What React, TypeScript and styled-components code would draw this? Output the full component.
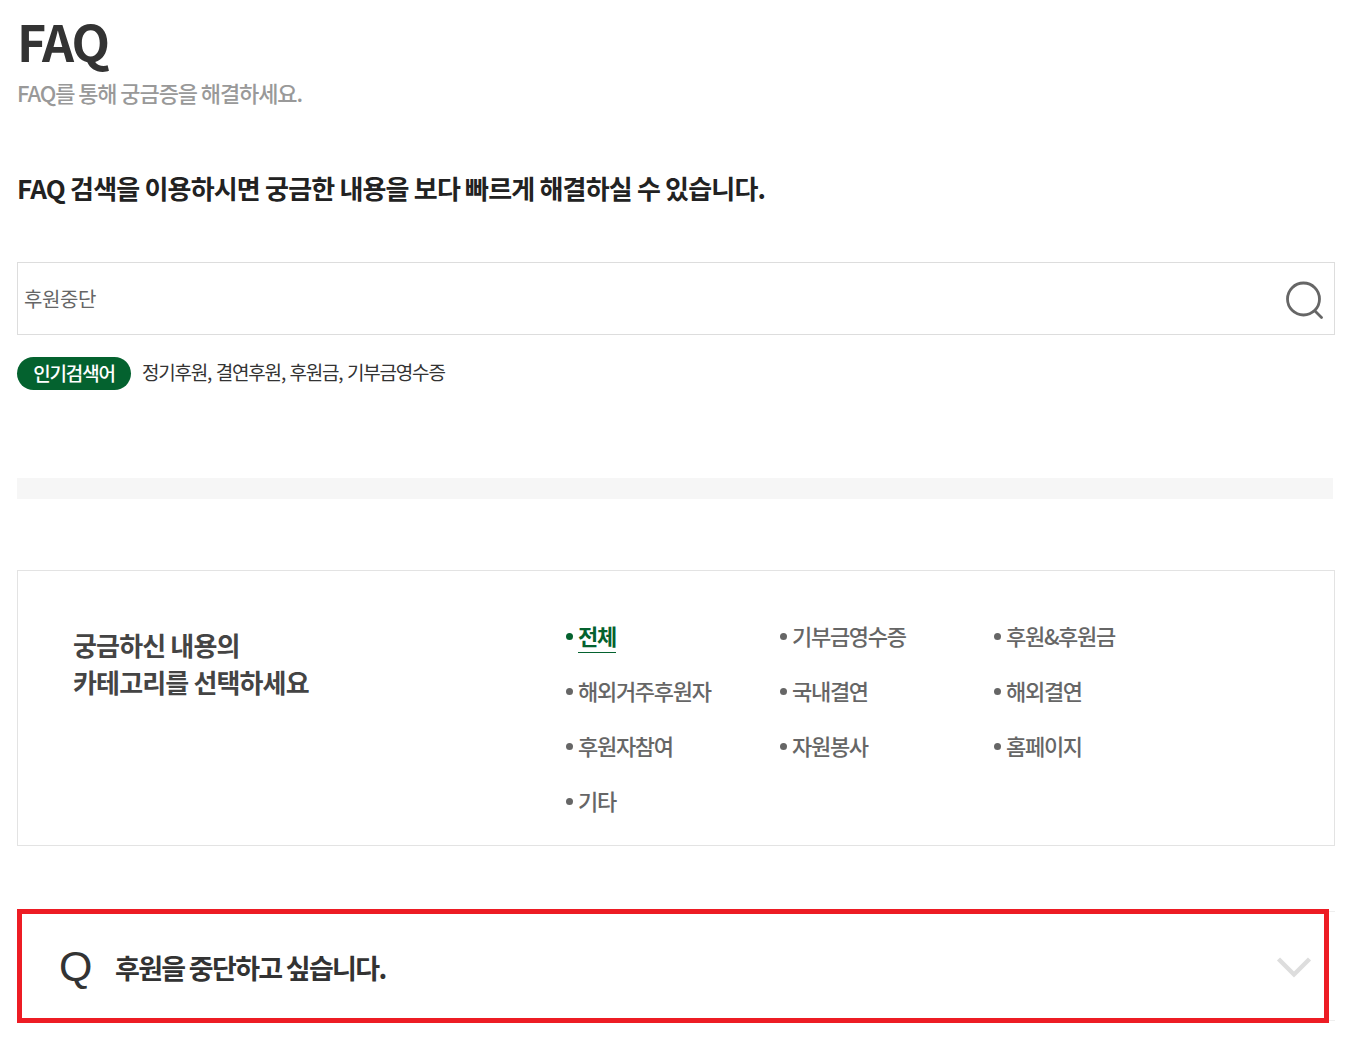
import React from 'react';
import styled, { createGlobalStyle } from 'styled-components';

const categories = [
  '전체',
  '기부금영수증',
  '후원&후원금',
  '해외거주후원자',
  '국내결연',
  '해외결연',
  '후원자참여',
  '자원봉사',
  '홈페이지',
  '기타',
];

export default function App() {
  return (
    <>
      <GlobalStyle />
      <Page>
        <Title>FAQ</Title>
        <Subtitle>FAQ를 통해 궁금증을 해결하세요.</Subtitle>
        <Lead>FAQ 검색을 이용하시면 궁금한 내용을 보다 빠르게 해결하실 수 있습니다.</Lead>
        <SearchBox>
          <SearchText>후원중단</SearchText>
          <svg width="40" height="40" viewBox="0 0 40 40" fill="none">
            <circle cx="18.5" cy="20" r="16" stroke="#666" strokeWidth="2.8" />
            <path d="M30 32l6.5 6.5" stroke="#666" strokeWidth="2.8" strokeLinecap="round" />
          </svg>
        </SearchBox>
        <PopularRow>
          <PopularBadge>인기검색어</PopularBadge>
          <PopularWords>정기후원, 결연후원, 후원금, 기부금영수증</PopularWords>
        </PopularRow>
        <GrayBar />
        <CategoryBox>
          <CategoryTitle>
            궁금하신 내용의
            <br />
            카테고리를 선택하세요
          </CategoryTitle>
          <CategoryGrid>
            {categories.map((name, i) => (
              <CategoryItem key={name} $active={i === 0}>
                <CategoryLabel $active={i === 0}>{name}</CategoryLabel>
              </CategoryItem>
            ))}
          </CategoryGrid>
        </CategoryBox>
        <QuestionRow>
          <QuestionMark>Q</QuestionMark>
          <QuestionText>후원을 중단하고 싶습니다.</QuestionText>
          <Chevron width="36" height="24" viewBox="0 0 36 24" fill="none">
            <path d="M2.5 5L18 20.5 33.5 5" stroke="#ddd" strokeWidth="4.4" />
          </Chevron>
          <Highlight />
        </QuestionRow>
      </Page>
    </>
  );
}

const GlobalStyle = createGlobalStyle`
  html, body {
    margin: 0;
    padding: 0;
    background: #fff;
  }

  body {
    font-family: "Noto Sans CJK KR", "Noto Sans", sans-serif;
    color: #333;
  }
`;

const Page = styled.div`
  width: 1318px;
  height: 1044px;
  margin-left: 17px;
`;

const Title = styled.h1`
  margin: 0;
  padding-top: 6px;
  font-size: 50px;
  line-height: 68px;
  font-weight: 700;
  letter-spacing: -2px;
  color: #333;
`;

const Subtitle = styled.p`
  margin: 3px 0 0;
  font-size: 22px;
  line-height: 30px;
  font-weight: 500;
  letter-spacing: -1.1px;
  color: #999;
`;

const Lead = styled.h2`
  margin: 0;
  padding-top: 62px;
  font-size: 26px;
  line-height: 38px;
  font-weight: 700;
  letter-spacing: -0.82px;
  color: #222;
`;

const SearchBox = styled.div`
  display: flex;
  align-items: center;
  justify-content: space-between;
  box-sizing: border-box;
  width: 1318px;
  height: 73px;
  margin-top: 55px;
  padding: 0 9px 0 6px;
  border: 1px solid #ddd;
`;

const SearchText = styled.span`
  font-size: 20px;
  letter-spacing: -0.4px;
  color: #666;
`;

const PopularRow = styled.div`
  display: flex;
  align-items: center;
  gap: 11px;
  margin-top: 22px;
`;

const PopularBadge = styled.span`
  display: flex;
  align-items: center;
  justify-content: center;
  box-sizing: border-box;
  width: 114px;
  height: 33px;
  padding-bottom: 2px;
  border-radius: 17px;
  background: #04622f;
  color: #fff;
  font-size: 19px;
  font-weight: 500;
  letter-spacing: -1.2px;
`;

const PopularWords = styled.span`
  padding-bottom: 4px;
  font-size: 19px;
  letter-spacing: -1.2px;
  word-spacing: 1.5px;
  color: #333;
`;

const GrayBar = styled.div`
  width: 1316px;
  height: 21px;
  margin-top: 88px;
  background: #f6f6f6;
`;

const CategoryBox = styled.section`
  display: flex;
  box-sizing: border-box;
  width: 1318px;
  height: 276px;
  margin-top: 71px;
  padding: 48px 0 0 55px;
  border: 1px solid #e3e3e3;
`;

const CategoryTitle = styled.h3`
  width: 492px;
  margin: -9px 0 0;
  padding-top: 16px;
  font-size: 26px;
  line-height: 37px;
  font-weight: 700;
  letter-spacing: -0.85px;
  color: #444;
`;

const CategoryGrid = styled.ul`
  display: grid;
  grid-template-columns: repeat(3, 214px);
  grid-auto-rows: 55px;
  align-content: start;
  margin: 0;
  padding: 0;
  list-style: none;
`;

const CategoryItem = styled.li<{ $active: boolean }>`
  display: flex;
  align-items: flex-start;
  gap: 5px;
  color: ${(p) => (p.$active ? '#04622f' : '#666')};

  &::before {
    content: '';
    flex: none;
    width: 7px;
    height: 7px;
    margin: 14px 0 0 1px;
    border-radius: 50%;
    background: currentColor;
  }
`;

const CategoryLabel = styled.span<{ $active: boolean }>`
  height: ${(p) => (p.$active ? '33px' : 'auto')};
  border-bottom: ${(p) => (p.$active ? '1px solid #04622f' : '0')};
  font-size: 22px;
  line-height: 32px;
  font-weight: ${(p) => (p.$active ? 700 : 500)};
  letter-spacing: -1.3px;
`;

const QuestionRow = styled.div`
  position: relative;
  display: flex;
  align-items: center;
  box-sizing: border-box;
  width: 1318px;
  height: 110px;
  margin-top: 65px;
  padding-left: 42px;
  border-top: 1px solid #eee;
  border-bottom: 1px solid #eee;
`;

const QuestionMark = styled.span`
  width: 56px;
  font-family: "Liberation Sans", sans-serif;
  font-size: 43px;
  line-height: 50px;
  color: #333;
`;

const QuestionText = styled.span`
  flex: 1;
  padding-top: 2px;
  font-size: 27px;
  font-weight: 700;
  letter-spacing: -1.7px;
  color: #333;
`;

const Chevron = styled.svg`
  margin-right: 23px;
`;

const Highlight = styled.div`
  position: absolute;
  top: -3px;
  left: 0;
  width: 1312px;
  height: 114px;
  box-sizing: border-box;
  border: 5px solid #ed1c24;
`;
